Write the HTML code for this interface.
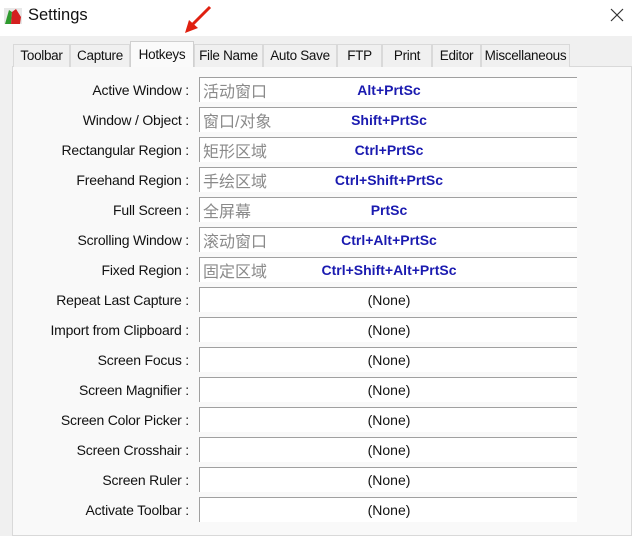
<!DOCTYPE html>
<html><head><meta charset="utf-8"><style>
*{margin:0;padding:0;box-sizing:border-box}
body{width:632px;height:526px;overflow:hidden;background:#f0f0f0;font-family:"Liberation Sans","Noto Sans CJK SC",sans-serif;position:relative;font-size:13.5px;color:#000;line-height:1.15}
.title{position:absolute;left:0;top:0;width:632px;height:36px;background:#fff}
.title .t{position:absolute;left:28px;top:6px;font-size:16.5px;color:#111}
.tab{position:absolute;top:44px;height:23px;border:1px solid #d9d9d9;border-bottom:none;background:#f0f0f0;text-align:center;line-height:21px;font-size:13.5px;color:#111;letter-spacing:-0.3px}
.tab.a{top:41px;height:26px;background:#fafafa;line-height:25px;z-index:2;border-color:#d0d0d0}
.panel{position:absolute;left:12px;top:66px;width:620px;height:470px;background:#f9f9f9;border:1px solid #d9d9d9}
.lab{position:absolute;right:443px;width:200px;text-align:right;font-size:14px;color:#111;letter-spacing:-0.2px}
.f{position:absolute;left:199px;width:378px;height:25px;background:#fff;border-top:1px solid #a0a0a0;border-left:1px solid #a0a0a0}
.f .cn{position:absolute;left:3px;top:5px;font-size:16px;line-height:20px;color:#8a8a8a}
.f .k{position:absolute;left:0;width:378px;top:4px;text-align:center;font-weight:bold;color:#1a1ab0;font-size:14px}
.f .n{position:absolute;left:0;width:378px;top:4px;text-align:center;color:#111;font-size:14px}
</style></head><body>
<div class="title">
<svg style="position:absolute;left:3px;top:7px" width="20" height="18" viewBox="0 0 20 18"><rect x="1" y="1" width="18" height="16" fill="#e8e8e8"/><path d="M2 17 L6 3 L9 5 L8 17Z" fill="#2e9a2e"/><path d="M8 17 L9 5 L13 2 L18 10 L17 17Z" fill="#d42020"/></svg>
<div class="t">Settings</div>
<svg style="position:absolute;left:610px;top:8px" width="14" height="14"><path d="M1 1L13 13M13 1L1 13" stroke="#333" stroke-width="1.2"/></svg>
<svg style="position:absolute;left:180px;top:4px" width="34" height="32"><path d="M30 3 L12 21" stroke="#e02010" stroke-width="3"/><path d="M5 29 L9 16 L18 24Z" fill="#e02010"/></svg>
</div>
<div class="panel"></div>
<div class="tab" style="left:13px;width:57px">Toolbar</div>
<div class="tab" style="left:70px;width:60px">Capture</div>
<div class="tab a" style="left:130px;width:64px">Hotkeys</div>
<div class="tab" style="left:194px;width:69px">File Name</div>
<div class="tab" style="left:263px;width:74px">Auto Save</div>
<div class="tab" style="left:337px;width:45px">FTP</div>
<div class="tab" style="left:382px;width:50px">Print</div>
<div class="tab" style="left:432px;width:49px">Editor</div>
<div class="tab" style="left:481px;width:89px">Miscellaneous</div>

<div class="lab" style="top:82px">Active Window :</div><div class="f" style="top:77px"><span class="cn">活动窗口</span><span class="k">Alt+PrtSc</span></div>
<div class="lab" style="top:112px">Window / Object :</div><div class="f" style="top:107px"><span class="cn">窗口/对象</span><span class="k">Shift+PrtSc</span></div>
<div class="lab" style="top:142px">Rectangular Region :</div><div class="f" style="top:137px"><span class="cn">矩形区域</span><span class="k">Ctrl+PrtSc</span></div>
<div class="lab" style="top:172px">Freehand Region :</div><div class="f" style="top:167px"><span class="cn">手绘区域</span><span class="k">Ctrl+Shift+PrtSc</span></div>
<div class="lab" style="top:202px">Full Screen :</div><div class="f" style="top:197px"><span class="cn">全屏幕</span><span class="k">PrtSc</span></div>
<div class="lab" style="top:232px">Scrolling Window :</div><div class="f" style="top:227px"><span class="cn">滚动窗口</span><span class="k">Ctrl+Alt+PrtSc</span></div>
<div class="lab" style="top:262px">Fixed Region :</div><div class="f" style="top:257px"><span class="cn">固定区域</span><span class="k">Ctrl+Shift+Alt+PrtSc</span></div>
<div class="lab" style="top:292px">Repeat Last Capture :</div><div class="f" style="top:287px"><span class="n">(None)</span></div>
<div class="lab" style="top:322px">Import from Clipboard :</div><div class="f" style="top:317px"><span class="n">(None)</span></div>
<div class="lab" style="top:352px">Screen Focus :</div><div class="f" style="top:347px"><span class="n">(None)</span></div>
<div class="lab" style="top:382px">Screen Magnifier :</div><div class="f" style="top:377px"><span class="n">(None)</span></div>
<div class="lab" style="top:412px">Screen Color Picker :</div><div class="f" style="top:407px"><span class="n">(None)</span></div>
<div class="lab" style="top:442px">Screen Crosshair :</div><div class="f" style="top:437px"><span class="n">(None)</span></div>
<div class="lab" style="top:472px">Screen Ruler :</div><div class="f" style="top:467px"><span class="n">(None)</span></div>
<div class="lab" style="top:502px">Activate Toolbar :</div><div class="f" style="top:497px"><span class="n">(None)</span></div>
</body></html>
